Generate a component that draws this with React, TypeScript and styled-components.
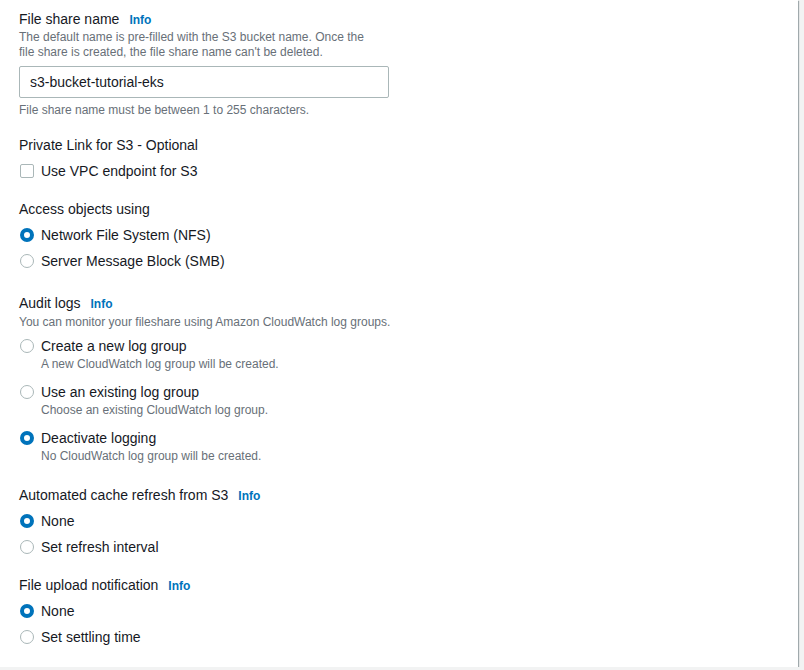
import styled, { createGlobalStyle } from "styled-components";

const GlobalStyle = createGlobalStyle`
  html, body {
    margin: 0;
    padding: 0;
    background: #f2f3f3;
  }
  body {
    font-family: "Liberation Sans", Arial, sans-serif;
    color: #16191f;
  }
`;

type Option = { label: string; description?: string; checked?: boolean };

const Card = styled.div`
  box-sizing: border-box;
  width: 798px;
  height: 667px;
  background: #ffffff;
  box-shadow: 1px 1px 1px 0 rgba(0, 28, 36, 0.3), 0 1px 1px 0 rgba(0, 28, 36, 0.3);
  padding: 9px 19px 0;
  display: flex;
  flex-direction: column;
`;

const Section = styled.div<{ $gap?: number }>`
  display: flex;
  flex-direction: column;
  margin-top: ${(p) => (p.$gap ?? 0)}px;
`;

const LabelRow = styled.div`
  display: flex;
  align-items: center;
  gap: 10px;
  height: 20px;
  font-size: 14px;
  line-height: 20px;
  color: #16191f;
`;

const InfoLink = styled.a`
  font-size: 12px;
  line-height: 16px;
  font-weight: 700;
  color: #0073bb;
  text-decoration: none;
  margin-top: 1px;
`;

const Description = styled.div<{ $wide?: boolean; $top?: number }>`
  font-size: 12px;
  line-height: 15px;
  color: #687078;
  max-width: ${(p) => (p.$wide ? "none" : "360px")};
  margin-top: ${(p) => (p.$top ?? 1)}px;
`;

const Constraint = styled.div`
  margin-top: 4px;
  font-size: 12px;
  line-height: 16px;
  color: #687078;
`;

const Input = styled.input`
  box-sizing: border-box;
  width: 370px;
  height: 32px;
  margin-top: 6px;
  padding: 4px 10px;
  border: 1px solid #aab7b8;
  border-radius: 2px;
  font-family: inherit;
  font-size: 14px;
  color: #16191f;
  outline: none;
`;

const Options = styled.div`
  display: flex;
  flex-direction: column;
  gap: 6px;
  margin-top: 6px;
`;

const OptionRow = styled.label<{ $withDesc?: boolean }>`
  display: grid;
  grid-template-columns: 14px 1fr;
  column-gap: 7px;
  padding-bottom: ${(p) => (p.$withDesc ? "4px" : "0")};
  padding-left: 1px;
  font-size: 14px;
  line-height: 20px;
  color: #16191f;
  cursor: pointer;
`;

const RadioDot = styled.span<{ $checked?: boolean }>`
  box-sizing: border-box;
  width: 14px;
  height: 14px;
  margin-top: 3px;
  border-radius: 50%;
  border: ${(p) => (p.$checked ? "4px solid #0073bb" : "1.5px solid #aab7b8")};
  background: #ffffff;
`;

const CheckBox = styled.span`
  box-sizing: border-box;
  width: 14px;
  height: 14px;
  margin-top: 3px;
  border: 1.5px solid #aab7b8;
  border-radius: 2px;
  background: #ffffff;
`;

const OptionDesc = styled.div`
  grid-column: 2;
  font-size: 12px;
  line-height: 16px;
  color: #687078;
`;

function Label({ text, info }: { text: string; info?: boolean }) {
  return (
    <LabelRow>
      <span>{text}</span>
      {info && <InfoLink href="#">Info</InfoLink>}
    </LabelRow>
  );
}

function RadioGroup({ options }: { options: Option[] }) {
  return (
    <Options>
      {options.map((o) => (
        <OptionRow key={o.label} $withDesc={!!o.description}>
          <RadioDot $checked={o.checked} />
          <span>{o.label}</span>
          {o.description && <OptionDesc>{o.description}</OptionDesc>}
        </OptionRow>
      ))}
    </Options>
  );
}

export default function App() {
  return (
    <>
      <GlobalStyle />
      <Card>
        <Section>
          <Label text="File share name" info />
          <Description>
            The default name is pre-filled with the S3 bucket name. Once the
            file share is created, the file share name can't be deleted.
          </Description>
          <Input defaultValue="s3-bucket-tutorial-eks" />
          <Constraint>File share name must be between 1 to 255 characters.</Constraint>
        </Section>

        <Section $gap={17}>
          <Label text="Private Link for S3 - Optional" />
          <Options>
            <OptionRow>
              <CheckBox />
              <span>Use VPC endpoint for S3</span>
            </OptionRow>
          </Options>
        </Section>

        <Section $gap={18}>
          <Label text="Access objects using" />
          <RadioGroup
            options={[
              { label: "Network File System (NFS)", checked: true },
              { label: "Server Message Block (SMB)" },
            ]}
          />
        </Section>

        <Section $gap={22}>
          <Label text="Audit logs" info />
          <Description $wide $top={2}>
            You can monitor your fileshare using Amazon CloudWatch log groups.
          </Description>
          <RadioGroup
            options={[
              {
                label: "Create a new log group",
                description: "A new CloudWatch log group will be created.",
              },
              {
                label: "Use an existing log group",
                description: "Choose an existing CloudWatch log group.",
              },
              {
                label: "Deactivate logging",
                description: "No CloudWatch log group will be created.",
                checked: true,
              },
            ]}
          />
        </Section>

        <Section $gap={17}>
          <Label text="Automated cache refresh from S3" info />
          <RadioGroup
            options={[
              { label: "None", checked: true },
              { label: "Set refresh interval" },
            ]}
          />
        </Section>

        <Section $gap={18}>
          <Label text="File upload notification" info />
          <RadioGroup
            options={[
              { label: "None", checked: true },
              { label: "Set settling time" },
            ]}
          />
        </Section>
      </Card>
    </>
  );
}
